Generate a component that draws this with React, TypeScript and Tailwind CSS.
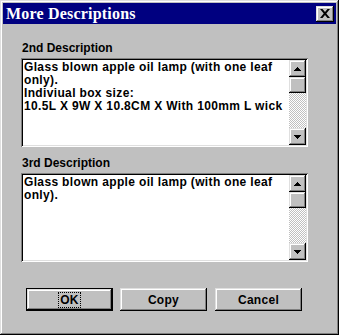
import React from 'react';

const raised =
  'shadow-[inset_-1px_-1px_#000000,inset_1px_1px_#dfdfdf,inset_-2px_-2px_#808080,inset_2px_2px_#ffffff]';
const sunken =
  'shadow-[inset_1px_1px_#808080,inset_-1px_-1px_#ffffff,inset_2px_2px_#000000,inset_-2px_-2px_#dfdfdf]';

const ArrowUp = () => (
  <svg width="7" height="4" viewBox="0 0 7 4">
    <path d="M3 0h1v1h1v1h1v1h1v1H0V3h1V2h1V1h1z" fill="#000" />
  </svg>
);

const ArrowDown = () => (
  <svg width="7" height="4" viewBox="0 0 7 4">
    <path d="M0 0h7v1H6v1H5v1H4v1H3V3H2V2H1V1H0z" fill="#000" />
  </svg>
);

const ScrollBar: React.FC = () => (
  <div className="flex flex-col w-[17px] h-full shrink-0">
    <div className={`h-[17px] bg-[#c0c0c0] flex items-center justify-center ${raised}`}>
      <ArrowUp />
    </div>
    <div className={`h-[16px] bg-[#c0c0c0] ${raised}`} />
    <div className="flex-1 bg-[repeating-conic-gradient(#ffffff_0%_25%,#c0c0c0_0%_50%)] bg-[length:2px_2px]" />
    <div className={`h-[17px] bg-[#c0c0c0] flex items-center justify-center ${raised}`}>
      <ArrowDown />
    </div>
  </div>
);

const TextBox: React.FC<{ lines: string[] }> = ({ lines }) => (
  <div className={`w-[287px] h-[89px] bg-white p-[2px] flex ${sunken}`}>
    <div className="flex-1 pl-[1px] pt-[1px] text-[12px] leading-[13px] tracking-[0.35px] font-bold text-black">
      {lines.map((l, i) => (
        <div key={i} className="whitespace-nowrap">{l}</div>
      ))}
    </div>
    <ScrollBar />
  </div>
);

const Button: React.FC<{ label: string; isDefault?: boolean; className?: string }> = ({ label, isDefault, className }) => (
  <div
    className={`w-[87px] h-[23px] bg-[#c0c0c0] ${isDefault ? 'border border-black' : ''} ${className ?? ''}`}
  >
    <div className={`w-full h-full flex items-center justify-center text-[12px] tracking-[0.3px] font-bold text-black ${raised}`}>
      {isDefault ? (
        <span className="px-[1px] leading-[14px] outline outline-1 outline-dotted outline-black">{label}</span>
      ) : (
        <span>{label}</span>
      )}
    </div>
  </div>
);

export default function App() {
  return (
    <div className="w-[339px] h-[335px] bg-[#c0c0c0] p-[3px] font-['Liberation_Sans',Arial,sans-serif] shadow-[inset_-1px_-1px_#000000,inset_1px_1px_#dfdfdf,inset_-2px_-2px_#808080,inset_2px_2px_#ffffff]">
      <div className="h-[21px] bg-[#000080] flex items-center justify-between pl-[3px] pr-[2px]">
        <span className="text-white font-bold text-[16px] leading-[18px] tracking-[0.2px] font-['Liberation_Serif','Times_New_Roman',serif]">
          More Descriptions
        </span>
        <div className={`w-[18px] h-[16px] bg-[#c0c0c0] flex items-center justify-center ${raised}`}>
          <svg width="10" height="9" viewBox="0 0 10 9">
            <path d="M0 0h2.5L5 3 7.5 0H10L6.3 4.5 10 9H7.5L5 6 2.5 9H0l3.7-4.5z" fill="#000" />
          </svg>
        </div>
      </div>

      <div className="pl-[18px]">
        <div className="mt-[17px] mb-[3px] h-[14px] leading-[14px] text-[12px] font-bold text-black pl-[1px]">
          2nd Description
        </div>
        <TextBox
          lines={[
            'Glass blown apple oil lamp (with one leaf',
            'only).',
            'Indiviual box size:',
            '10.5L X 9W X 10.8CM X With 100mm L wick',
          ]}
        />
        <div className="mt-[9px] mb-[3px] h-[14px] leading-[14px] text-[12px] font-bold text-black pl-[1px]">
          3rd Description
        </div>
        <TextBox lines={['Glass blown apple oil lamp (with one leaf', 'only).']} />
      </div>

      <div className="flex mt-[26px] pl-[23px]">
        <Button label="OK" isDefault />
        <Button label="Copy" className="ml-[7px]" />
        <Button label="Cancel" className="ml-[8px]" />
      </div>
    </div>
  );
}
